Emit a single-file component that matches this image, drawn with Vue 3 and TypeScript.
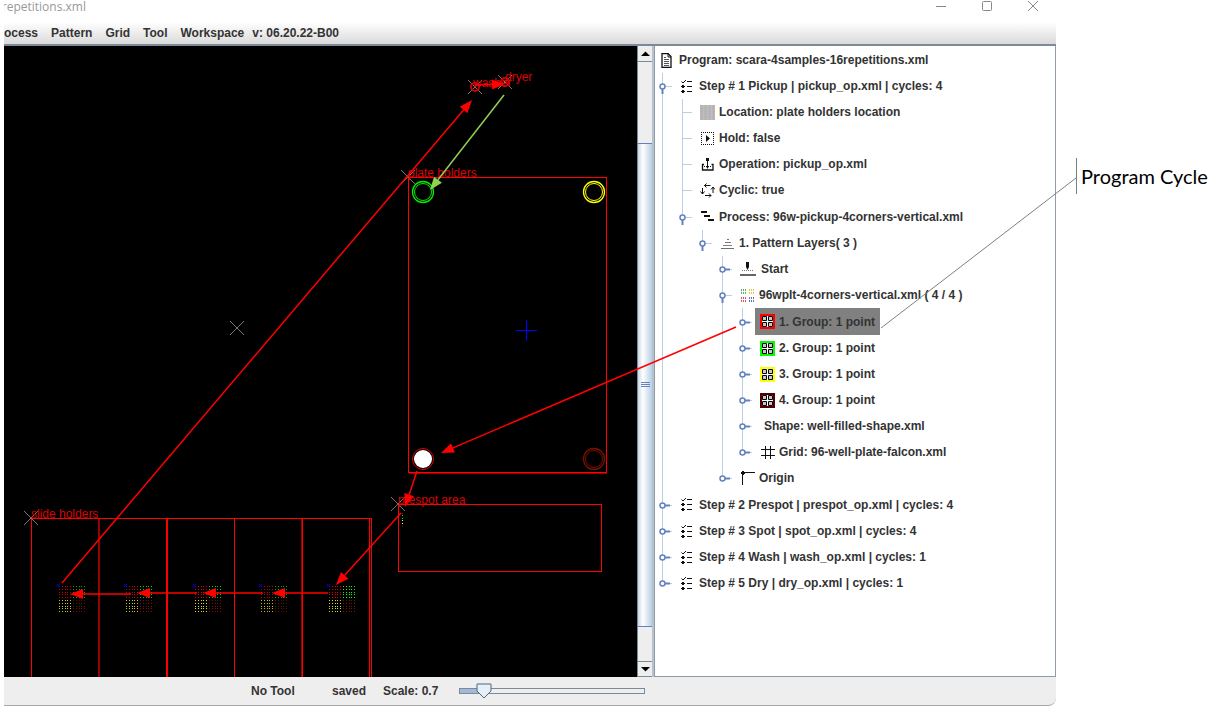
<script setup lang="ts">
import { ref } from 'vue'

interface Shape {
  d: string
  fill?: string
  stroke?: string
  width?: number
  dash?: string
}

interface TreeNode {
  label: string
  // One character per level: "|" running guide, "L" guide that ends here, " " empty
  guides: string
  toggle?: 'open' | 'closed'
  icon?: string
  color?: string
  wide?: boolean
  selected?: boolean
  spaced?: boolean
}

const ink = '#111111'

const listIcon: Shape[] = [
  { d: 'M1.5 2.5l1.5 1.5 3-3', stroke: ink },
  { d: 'M7 2.5h5M7 7.5h5M7 12.5h5', stroke: ink },
  { d: 'M2 6h2v1h1v1h-1v1h-2v-1h-1v-1h1zM2 11h2v1h1v1h-1v1h-2v-1h-1v-1h1z', fill: ink },
]

const icons: Record<string, Shape[]> = {
  file: [
    { d: 'M2 .5h6l3 3v11h-9z', stroke: ink, width: 1.3 },
    { d: 'M8 .5v3.500h3', stroke: ink },
    { d: 'M4 4.500h2M4 6.500h5M4 8.500h5M4 10.500h5M4 12.500h5', stroke: '#555555' },
  ],
  list: listIcon,
  location: [
    { d: 'M0 0h15v15h-15z', fill: '#b9b6b9' },
    { d: 'M1.5 0v15M5.5 0v15M9.5 0v15M13.5 0v15', stroke: '#a5b3a5', dash: '1 2' },
    { d: 'M3.5 0v15M7.5 0v15M11.5 0v15', stroke: '#c9bcc8', dash: '2 1' },
  ],
  hold: [
    { d: 'M1 1.5h13M1 13.5h13M1.5 1v13M13.5 1v13', stroke: ink, dash: '1 1' },
    { d: 'M6 4l4 3.5-4 3.5z', fill: ink },
  ],
  operation: [
    { d: 'M6 1h3v3h-3z', fill: ink },
    { d: 'M7.5 3v8', stroke: ink },
    { d: 'M4 9.500h7', stroke: ink, dash: '1 1' },
    { d: 'M6 9h3l-1.500 3z', fill: ink },
    { d: 'M4 7.500h-1.500v5.500h10.500v-5.500h-1.500', stroke: ink, width: 1.3 },
  ],
  cyclic: [
    { d: 'M10.500 2.500h-6M6.500 .5l-2 2 2 2', stroke: ink },
    { d: 'M2.500 5v6M.5 8.500l2 2.500 2-2.500', stroke: ink },
    { d: 'M5 12.500h6M9 10.500l2 2-2 2', stroke: ink },
    { d: 'M13 10v-6M11 6.500l2-2.500 2 2.500', stroke: ink },
  ],
  process: [{ d: 'M1 2h6v2h-6zM4 6h6v2h-6zM8 10h6v2h-6z', fill: ink }],
  layers: [
    { d: 'M7 3.500h2', stroke: '#667766' },
    { d: 'M5 6.500h6', stroke: '#777777' },
    { d: 'M3 9.500h9', stroke: '#997788' },
    { d: 'M1 12.500h13', stroke: '#667766' },
  ],
  start: [
    { d: 'M6 0h3v5l-1.500 3-1.500-3z', fill: ink },
    { d: 'M2 8.500h12', stroke: '#777777', dash: '1 1' },
    { d: 'M0 12h16v2h-16z', fill: '#666666' },
  ],
  pattern: [
    { d: 'M1.500 1v6M3.500 1v6M5.500 1v6', stroke: '#5cae64', dash: '2 1' },
    { d: 'M9.500 1v6M11.500 1v6M13.500 1v6', stroke: '#e3cb4a', dash: '2 1' },
    { d: 'M1.500 9v6M3.500 9v6M5.500 9v6', stroke: '#db5566', dash: '2 1' },
    { d: 'M9.500 9v6M11.500 9v6M13.500 9v6', stroke: '#6471c4', dash: '2 1' },
  ],
  group: [
    { d: 'M2 2h11v11h-11z', fill: '#ffffff' },
    { d: 'M2.500 2.500h4v4h-4zM8.500 2.500h4v4h-4zM2.500 8.500h4v4h-4zM8.500 8.500h4v4h-4z', fill: '#c8c8c8', stroke: '#000000' },
  ],
  grid: [{ d: 'M5.500 1v13M10.500 1v13M1 4.500h14M1 10.500h14', stroke: ink }],
  origin: [
    { d: 'M2.500 1v13M1 1.500h14', stroke: ink },
    { d: 'M2 0h2v1h1v2h-1v1h-2v-1h-1v-2h1z', fill: ink },
  ],
}

const nodes = ref<TreeNode[]>([
  { label: 'Program: scara-4samples-16repetitions.xml', guides: '', icon: 'file' },
  { label: 'Step # 1 Pickup | pickup_op.xml | cycles: 4', guides: '|', toggle: 'open', icon: 'list' },
  { label: 'Location: plate holders location', guides: '||', icon: 'location' },
  { label: 'Hold: false', guides: '||', icon: 'hold' },
  { label: 'Operation: pickup_op.xml', guides: '||', icon: 'operation' },
  { label: 'Cyclic: true', guides: '||', icon: 'cyclic' },
  { label: 'Process: 96w-pickup-4corners-vertical.xml', guides: '|L', toggle: 'open', icon: 'process', spaced: true },
  { label: '1. Pattern Layers( 3 )', guides: '| L', toggle: 'open', icon: 'layers' },
  { label: 'Start', guides: '|  |', toggle: 'closed', icon: 'start', wide: true },
  { label: '96wplt-4corners-vertical.xml ( 4 / 4 )', guides: '|  |', toggle: 'open', icon: 'pattern' },
  { label: '1. Group: 1 point', guides: '|  ||', toggle: 'closed', icon: 'group', color: '#ff0000', selected: true, spaced: true },
  { label: '2. Group: 1 point', guides: '|  ||', toggle: 'closed', icon: 'group', color: '#00ff00' },
  { label: '3. Group: 1 point', guides: '|  ||', toggle: 'closed', icon: 'group', color: '#ffff00' },
  { label: '4. Group: 1 point', guides: '|  ||', toggle: 'closed', icon: 'group', color: '#550000' },
  { label: 'Shape: well-filled-shape.xml', guides: '|  ||', toggle: 'closed' },
  { label: 'Grid: 96-well-plate-falcon.xml', guides: '|  |L', toggle: 'closed', icon: 'grid' },
  { label: 'Origin', guides: '|  L', toggle: 'closed', icon: 'origin' },
  { label: 'Step # 2 Prespot | prespot_op.xml | cycles: 4', guides: '|', toggle: 'closed', icon: 'list', spaced: true },
  { label: 'Step # 3 Spot | spot_op.xml | cycles: 4', guides: '|', toggle: 'closed', icon: 'list' },
  { label: 'Step # 4 Wash | wash_op.xml | cycles: 1', guides: '|', toggle: 'closed', icon: 'list' },
  { label: 'Step # 5 Dry | dry_op.xml | cycles: 1', guides: 'L', toggle: 'closed', icon: 'list' },
])

const menus = ['ocess', 'Pattern', 'Grid', 'Tool', 'Workspace']
const scale = ref(10)

function guideClass(mark: string): string {
  return mark === '|' ? 'full' : mark === 'L' ? 'half' : ''
}

function select(node: TreeNode): void {
  nodes.value.forEach((n) => (n.selected = n === node))
}

// Spotting samples on each slide: four 5 x 5 blocks
const steps = [0, 3, 6, 8, 11]
function block(x: number, y: number): string {
  return steps.map((r) => steps.map((c) => `M${x + c} ${y + r}h1v1h-1z`).join('')).join('')
}
const slides = [
  { x: 58, red: '#cc0000', green: '#00aa00', yellow: '#cccc00', brown: '#661000' },
  { x: 125, red: '#cc0000', green: '#00cc00', yellow: '#cccc00', brown: '#771000' },
  { x: 194, red: '#dd0000', green: '#00cc00', yellow: '#dddd00', brown: '#771000' },
  { x: 260, red: '#bb0000', green: '#00aa00', yellow: '#bbbb00', brown: '#551000' },
  { x: 328, red: '#dd0000', green: '#00ff00', yellow: '#dddd00', brown: '#771400' },
].map((s) => ({
  ...s,
  blocks: [
    { d: block(s.x + 1, 586), fill: s.red },
    { d: block(s.x + 15, 586), fill: s.green },
    { d: block(s.x + 1, 600), fill: s.yellow },
    { d: block(s.x + 15, 600), fill: s.brown },
  ],
}))

const crosses = [
  { x: 475, y: 87, r: 7 },
  { x: 505, y: 82, r: 7 },
  { x: 408, y: 177, r: 7 },
  { x: 398, y: 504, r: 7 },
  { x: 31, y: 518, r: 7 },
  { x: 237, y: 328, r: 7 },
]

const wells = [
  { x: 423, y: 192, color: '#00ee00' },
  { x: 594, y: 192, color: '#ffff00' },
  { x: 594, y: 459, color: '#771100' },
]

function arrow(x1: number, y1: number, x2: number, y2: number, color = '#ff0000') {
  const len = Math.hypot(x2 - x1, y2 - y1)
  const ux = (x2 - x1) / len
  const uy = (y2 - y1) / len
  const bx = x2 - ux * 13
  const by = y2 - uy * 13
  return {
    color,
    line: `M${x1} ${y1}L${bx} ${by}`,
    head: `M${x2} ${y2}L${bx - uy * 5} ${by + ux * 5}L${bx + uy * 5} ${by - ux * 5}Z`,
  }
}
const arrows = [
  arrow(62, 583, 472, 100),
  arrow(475, 85, 505, 84),
  arrow(504, 95, 430, 190, '#92d050'),
  arrow(736, 327, 441, 453),
  arrow(417, 471, 405, 507),
  arrow(401, 513, 336, 585),
  arrow(328, 593, 272, 593),
  arrow(263, 593, 203, 593),
  arrow(197, 593, 137, 593),
  arrow(131, 594, 70, 594),
]
</script>

<template>
  <div class="page">
    <main class="window">
      <header class="titlebar">
        <span class="title">6repetitions.xml</span>
        <div class="controls">
          <button type="button" aria-label="Minimize"><svg width="12" height="12"><path d="M1 6.500h10" /></svg></button>
          <button type="button" aria-label="Maximize"><svg width="12" height="12"><rect x="1.500" y="1.500" width="9" height="9" rx="1" /></svg></button>
          <button type="button" aria-label="Close"><svg width="12" height="12"><path d="M1 1l10 10M11 1l-10 10" /></svg></button>
        </div>
      </header>
      <nav class="menubar">
        <button v-for="menu in menus" :key="menu" type="button">{{ menu }}</button>
        <span>v: 06.20.22-B00</span>
      </nav>

      <div class="body">
        <section class="canvas">
          <svg width="100%" height="100%" role="img" aria-label="Workspace">
            <g transform="translate(-4 -46)">
              <g class="outline">
                <path d="M408.500 177.500H606.500V472.500H408.500Z" />
                <path d="M409 473.500H607" class="dim" />
                <path d="M398.500 504.500H601.500V571.500H398.500Z" />
                <path d="M31.500 2000V518.500H371.500V2000M369.500 519V2000M234.500 519V2000M302.500 519V2000" />
                <path d="M99 519V2000" class="thick dim" />
                <path d="M167 519V2000" class="thick" />
                <path d="M301.500 519V2000" class="dim" />
              </g>
              <g v-for="s in slides" :key="s.x">
                <path v-for="(b, i) in s.blocks" :key="i" :d="b.d" :fill="b.fill" />
                <path :d="`M${s.x - 1} 584l3 3m0 -3l-3 3`" stroke="#0000ff" />
              </g>
              <path v-for="(c, i) in crosses" :key="i" class="cross"
                :d="`M${c.x - c.r} ${c.y - c.r}L${c.x + c.r} ${c.y + c.r}M${c.x + c.r} ${c.y - c.r}L${c.x - c.r} ${c.y + c.r}`" />
              <path d="M516 330.500h21M526.500 320v21" stroke="#0000ff" />
              <g v-for="(w, i) in wells" :key="i" fill="none" :stroke="w.color">
                <circle :cx="w.x" :cy="w.y" r="10.500" stroke-width="1.300" />
                <circle :cx="w.x" :cy="w.y" r="8.500" />
              </g>
              <circle cx="423" cy="459" r="10.500" fill="none" stroke="#dd0000" />
              <circle cx="423" cy="459" r="9" fill="#ffffff" />
              <circle cx="475" cy="87" r="4" fill="none" stroke="#cc0000" stroke-width="2" />
              <circle cx="505" cy="82" r="4" fill="none" stroke="#cc0000" stroke-width="2" />
              <g class="names">
                <text x="473" y="87">washer</text>
                <text x="505" y="81">dryer</text>
                <text x="408" y="177">plate holders</text>
                <text x="398" y="504">prespot area</text>
                <text x="31" y="518">slide holders</text>
              </g>
              <path d="M402 513h1v1h-1zM402 526h1v1h-1z" fill="#990000" />
              <path d="M402 515h1v1h-1zM402 518h1v1h-1z" fill="#00ff00" />
              <path d="M402 520h1v1h-1zM402 523h1v1h-1z" fill="#ffff00" />
            </g>
          </svg>
        </section>

        <div class="scrollbar">
          <button type="button" aria-label="Scroll up"><svg width="9" height="5"><path d="M0 5l4.500-4.500 4.500 4.500z" /></svg></button>
          <span class="before"></span>
          <span class="thumb"><i></i><i></i><i></i></span>
          <span class="after"></span>
          <button type="button" aria-label="Scroll down"><svg width="9" height="5"><path d="M0 0l4.500 4.500 4.500-4.500z" /></svg></button>
        </div>
        <div class="splitter"></div>

        <ul class="tree">
          <li v-for="node in nodes" :key="node.label" :class="{ spaced: node.spaced }">
            <template v-for="(mark, i) in node.guides.split('')" :key="i">
              <button v-if="node.toggle && i === node.guides.length - 1" type="button" class="cell" :class="guideClass(mark)"
                :aria-label="(node.toggle === 'open' ? 'Collapse ' : 'Expand ') + node.label">
                <svg width="20" height="26">
                  <path d="M8 13.500h9" stroke="#b8cfe5" />
                  <path :d="node.toggle === 'open' ? 'M7.500 15v6' : 'M9 13.500h6'" stroke="#6382bf" stroke-width="2" />
                  <circle cx="7.500" cy="13.500" r="2.500" fill="#ffffff" stroke="#6382bf" stroke-width="1.500" />
                </svg>
              </button>
              <span v-else class="cell" :class="guideClass(mark)">
                <svg v-if="i === node.guides.length - 1" width="20" height="26"><path d="M8 13.500h9" stroke="#b8cfe5" /></svg>
              </span>
            </template>
            <button type="button" class="node" :class="{ selected: node.selected }" @click="select(node)">
              <svg v-if="node.icon" :width="node.wide ? 17 : 15" height="15">
                <rect v-if="node.color" width="15" height="15" :fill="node.color" />
                <path v-for="(s, k) in icons[node.icon]" :key="k" :d="s.d" :fill="s.fill ?? 'none'" :stroke="s.stroke"
                  :stroke-width="s.width ?? 1" :stroke-dasharray="s.dash" />
              </svg>
              <i v-else></i>
              <span>{{ node.label }}</span>
            </button>
          </li>
        </ul>
      </div>

      <footer class="statusbar">
        <span class="tool">No Tool</span>
        <span class="saved">saved</span>
        <label for="scale">Scale: 0.7</label>
        <input id="scale" v-model.number="scale" type="range" min="0" max="100" />
      </footer>
    </main>

    <aside class="note"><p>Program Cycle</p></aside>

    <svg class="overlay" aria-hidden="true">
      <g v-for="(a, i) in arrows" :key="i">
        <path :d="a.line" :stroke="a.color" stroke-width="1.500" />
        <path :d="a.head" :fill="a.color" />
      </g>
      <path d="M881 328L1076 178" stroke="#7f7f7f" />
    </svg>
  </div>
</template>

<style>
body {
  margin: 0;
  background: #ffffff;
}
</style>

<style scoped>
.page {
  position: relative;
  display: flex;
  box-sizing: border-box;
  min-height: 100vh;
  padding: 0 0 4px 4px;
  font: bold 12px/16px "Liberation Sans", Arial, sans-serif;
  color: #333333;
}
button {
  padding: 0;
  border: 0;
  background: none;
  font: inherit;
  color: inherit;
}
svg {
  display: block;
  flex: none;
}
.window {
  display: flex;
  flex: 1;
  flex-direction: column;
  min-width: 0;
}
.titlebar {
  display: flex;
  justify-content: space-between;
  height: 22px;
}
.title {
  display: flex;
  justify-content: flex-end;
  width: 82px;
  height: 16px;
  overflow: hidden;
  font: 12px/14px "Open Sans", sans-serif;
  color: #999999;
}
.controls {
  display: flex;
  gap: 34px;
  height: 12px;
  padding-right: 17px;
}
.controls path,
.controls rect {
  fill: none;
  stroke: #888888;
}
.menubar {
  display: flex;
  gap: 13px;
  align-items: center;
  height: 22px;
  background: linear-gradient(#ffffff, #dadada);
  border-bottom: 1px solid #7a8a99;
}
.menubar span {
  margin-left: -5px;
}
.body {
  display: flex;
  flex: 1;
  border-top: 1px solid #7a8a99;
}
.canvas {
  position: relative;
  flex: 1;
  min-width: 0;
  overflow: hidden;
  background: #000000;
}
.canvas > svg {
  position: absolute;
  inset: 0;
}
.outline {
  fill: none;
  stroke: #ff0000;
  shape-rendering: crispEdges;
}
.outline .dim {
  stroke: #990000;
}
.outline .thick {
  stroke-width: 2;
}
.cross {
  fill: none;
  stroke: #777777;
}
.names {
  font: 12px "Liberation Sans", Arial, sans-serif;
  fill: #dd0000;
}
.scrollbar {
  display: flex;
  flex-direction: column;
  box-sizing: border-box;
  width: 15px;
  background: #eeeeee;
  border: solid #7a8a99;
  border-width: 0 0 0 1px;
}
.scrollbar button {
  display: flex;
  align-items: center;
  justify-content: center;
  height: 16px;
  border-bottom: 1px solid #7a8a99;
}
.scrollbar button:last-child {
  border-top: 1px solid #7a8a99;
}
.before {
  flex: 81;
}
.thumb {
  display: flex;
  flex: 484;
  flex-direction: column;
  gap: 1px;
  align-items: center;
  justify-content: center;
  background: linear-gradient(90deg, #c8d8e8, #ffffff 35%, #b8cfe5);
  border: solid #6382bf;
  border-width: 1px 0;
}
.thumb i {
  width: 9px;
  height: 1px;
  background: #6382bf;
}
.after {
  flex: 34;
}
.splitter {
  width: 2px;
  background: #b8c2cc;
}
.tree {
  box-sizing: border-box;
  width: 402px;
  margin: 0;
  padding: 1px 0 0;
  list-style: none;
  background: #ffffff;
  border: 1px solid #8c9cab;
  border-top: 0;
}
.tree li {
  display: flex;
  height: 26px;
}
.tree li.spaced {
  height: 27px;
}
.cell {
  display: flex;
  align-items: flex-end;
  width: 20px;
  background: no-repeat 7px 0 / 1px 100%;
}
.full {
  background-image: linear-gradient(#b8cfe5, #b8cfe5);
}
.half {
  background-image: linear-gradient(#b8cfe5, #b8cfe5);
  background-size: 1px 50%;
}
.node {
  display: flex;
  gap: 4px;
  align-items: center;
  padding: 0 5px;
  white-space: nowrap;
}
.node.selected {
  background: #808080;
}
.statusbar {
  display: flex;
  align-items: center;
  height: 28px;
  padding-left: 247px;
  background: #eeeeee;
  border: solid #a8a8a8;
  border-width: 0 0 1px;
  border-radius: 0 0 8px 0;
}
.tool {
  width: 81px;
}
.saved {
  width: 51px;
}
.statusbar label {
  width: 76px;
}
.statusbar input {
  width: 186px;
  height: 18px;
  margin: 0;
  appearance: none;
  background: linear-gradient(90deg, #a3b8d8 12%, #eeeeee 12%) center / 184px 4px no-repeat,
    linear-gradient(#7a8a99, #7a8a99) center / 186px 6px no-repeat;
}
.statusbar input::-webkit-slider-thumb {
  width: 16px;
  height: 16px;
  appearance: none;
  background: url("data:image/svg+xml,%3Csvg xmlns='http://www.w3.org/2000/svg' width='16' height='16'%3E%3Cpath d='M1 1h14v7l-7 7-7-7z' fill='%23e4effa' stroke='%23556677'/%3E%3C/svg%3E");
}
.note {
  box-sizing: border-box;
  width: 156px;
  padding: 158px 0 0 20px;
}
.note p {
  margin: 0;
  padding-left: 4px;
  border-left: 1px solid #7f7f7f;
  font: 20px/36px Lato, sans-serif;
  color: #000000;
  white-space: nowrap;
}
.overlay {
  position: absolute;
  top: 0;
  left: 0;
  width: 100%;
  height: 100%;
  fill: none;
  pointer-events: none;
}
</style>
